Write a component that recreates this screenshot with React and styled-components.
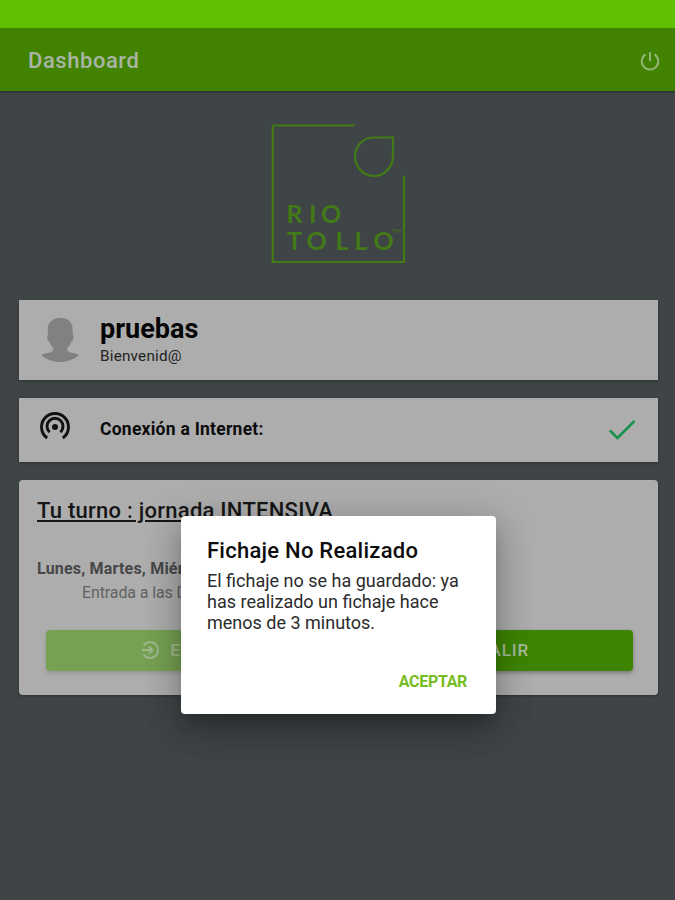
import React from "react";
import styled, { createGlobalStyle } from "styled-components";

const GlobalStyle = createGlobalStyle`
  *, *::before, *::after { box-sizing: border-box; }
  body { margin: 0; background: #3f4446; font-family: Roboto, "Liberation Sans", sans-serif; }
  h1, h2, h3, p { margin: 0; font-weight: 400; }
  button { border: 0; padding: 0; background: none; font-family: inherit; }
  svg { display: block; flex: none; }
`;

const Screen = styled.div`
  position: relative;
  width: 675px;
  height: 900px;
  overflow: hidden;
  background: #3f4446;
`;

const StatusBar = styled.div`
  height: 28px;
  background: #62c002;
`;

const Toolbar = styled.header`
  display: flex;
  align-items: center;
  justify-content: space-between;
  height: 63px;
  padding: 2px 13px 0 28px;
  background: #418200;
  box-shadow: 0 1px 2px rgba(0, 0, 0, 0.35);
`;

const ToolbarTitle = styled.h1`
  font-size: 22px;
  line-height: 28px;
  font-weight: 500;
  letter-spacing: 0.55px;
  color: #a9b5a5;
`;

const IconButton = styled.button`
  display: flex;
  color: #91b474;
`;

const Content = styled.main`
  display: flex;
  flex-direction: column;
  padding: 31px 17px 0 19px;
`;

const LogoRow = styled.div`
  display: flex;
  justify-content: center;
  height: 178px;
  padding-right: 1px;
`;

const Card = styled.section`
  display: flex;
  align-items: center;
  height: ${(p) => p.$height}px;
  margin-bottom: 18px;
  padding: 0 22px 0 20px;
  background: #adadad;
  box-shadow: 0 1px 3px rgba(0, 0, 0, 0.3);
`;

const IconSlot = styled.div`
  width: 61px;
  padding-bottom: ${(p) => p.$lift || 0}px;
`;

const UserName = styled.h2`
  font-size: 27px;
  line-height: 30px;
  font-weight: 700;
  color: #050505;
`;

const Welcome = styled.p`
  margin-top: 2px;
  font-size: 15.3px;
  line-height: 20px;
  letter-spacing: 0.2px;
  color: #222;
`;

const ConnectionLabel = styled.p`
  flex: 1;
  padding-bottom: 2px;
  font-size: 17.500px;
  line-height: 22px;
  font-weight: 700;
  letter-spacing: 0.25px;
  color: #0b0b0b;
`;

const ShiftCard = styled.section`
  display: flex;
  flex-direction: column;
  height: 215px;
  padding: 17px 25px 0 18px;
  border-radius: 4px;
  background: #adadad;
  box-shadow: 0 1px 3px rgba(0, 0, 0, 0.3);
`;

const ShiftTitle = styled.h2`
  font-size: 22px;
  line-height: 28px;
  font-weight: 500;
  letter-spacing: 0.25px;
  text-decoration: underline;
  text-decoration-thickness: 2px;
  text-underline-offset: 2px;
  color: #161616;
`;

const ShiftDays = styled.p`
  margin-top: 34px;
  font-size: 16px;
  line-height: 20px;
  font-weight: 700;
  letter-spacing: 0.2px;
  color: #474747;
`;

const ShiftTime = styled.p`
  margin: 4px 0 0 45px;
  font-size: 16px;
  line-height: 20px;
  letter-spacing: -0.12px;
  color: #626262;
`;

const ButtonRow = styled.div`
  display: grid;
  grid-template-columns: 1fr 1fr;
  gap: 10px;
  margin: 27px 0 0 9px;
`;

const ActionButton = styled.button`
  display: flex;
  align-items: center;
  justify-content: center;
  gap: 10px;
  height: 41px;
  padding-bottom: 1px;
  border-radius: 4px;
  font-size: 17px;
  font-weight: 500;
  letter-spacing: 0.9px;
  background: ${(p) => (p.$muted ? "#76a052" : "#3d8500")};
  color: ${(p) => (p.$muted ? "#a3ba91" : "#a8bb9b")};
  box-shadow: 0 2px 4px rgba(0, 0, 0, ${(p) => (p.$muted ? 0.15 : 0.3)});
`;

const Dialog = styled.div`
  position: absolute;
  left: 181px;
  top: 516px;
  display: flex;
  flex-direction: column;
  width: 315px;
  height: 198px;
  padding: 21px 26px 0;
  border-radius: 4px;
  background: #fff;
  box-shadow: 0 11px 15px -7px rgba(0, 0, 0, 0.25), 0 20px 36px 3px rgba(0, 0, 0, 0.14),
    0 6px 34px 6px rgba(0, 0, 0, 0.14);
`;

const DialogTitle = styled.h3`
  font-size: 22px;
  line-height: 28px;
  font-weight: 500;
  letter-spacing: 0.25px;
  color: #0d0d0d;
`;

const DialogText = styled.p`
  margin-top: 5px;
  font-size: 18px;
  line-height: 21px;
  white-space: nowrap;
  color: #2b2b2b;
`;

const DialogAction = styled.button`
  align-self: flex-end;
  margin: 39px 3px 0 0;
  font-size: 16px;
  line-height: 20px;
  font-weight: 700;
  letter-spacing: -0.32px;
  color: #76bd22;
`;

const LogoText = styled.text`
  font-family: Lato, sans-serif;
  font-size: 25px;
  font-weight: 700;
  fill: #427a17;
`;

const TrademarkText = styled.text`
  font-family: Lato, sans-serif;
  font-size: 6px;
  fill: #427a17;
`;

function Logo() {
  return (
    <svg width="136" height="142" viewBox="0 0 136 142" fill="none" stroke="#427a17" strokeWidth="2.2">
      <path d="M84.500 3.500H2.800V140H134V53.500" />
      <path d="M123 15.500H104C93 15.500 85 24 85 34.500S93.500 54 104 54S123 45 123 34Z" />
      <g stroke="none">
        <LogoText x="16.500 39 51" y="101">RIO</LogoText>
        <LogoText x="17 36.500 65.500 84.500 103.500" y="128">TOLLO</LogoText>
        <TrademarkText x="122" y="111">TM</TrademarkText>
      </g>
    </svg>
  );
}

function PowerIcon() {
  return (
    <svg width="24" height="24" viewBox="0 0 24 24" fill="none" stroke="currentColor" strokeWidth="2">
      <path d="M12 3v9M7.500 5.300A8.300 8.300 0 1 0 16.500 5.300" />
    </svg>
  );
}

function Avatar() {
  return (
    <svg width="43" height="46" viewBox="1 0 39 46" preserveAspectRatio="none" fill="#818181">
      <path d="M20.500 1C13 1 9 5.500 9 12.500C9 14.500 9 16 9.300 17.500C7.700 18 8.300 23.500 10.600 25C11.300 27.500 12.500 29.500 14 31C14.500 35 11.500 35.500 7.500 36.200C4.500 36.800 3.400 37.500 3.500 38.500C8 42.500 13.500 45 20 45C26.500 45 32.500 42.500 37 38.500C37 37.500 35.500 36.800 33 36.200C29 35.500 26 35 26.500 31C28 29.500 29.500 27.500 30.200 25C32.500 23.500 33 18 31.500 17.500C31.800 16 31.800 14.500 31.500 12.500C31.500 5.500 28 1 20.500 1Z" />
    </svg>
  );
}

function SignalIcon() {
  return (
    <svg width="32" height="30" viewBox="0 0 32 30" fill="none" stroke="#111" strokeWidth="2.900">
      <path d="M8.200 27A13.500 13.500 0 1 1 23.800 27M10.600 21.200A8 8 0 1 1 21.400 21.200" />
      <circle cx="16" cy="16" r="3" fill="#111" stroke="none" />
    </svg>
  );
}

function CheckIcon() {
  return (
    <svg width="28" height="22" viewBox="0 0 28 22" fill="none" stroke="#17924c" strokeWidth="2.600">
      <path d="M1.800 11.500L9.500 19L26.500 2" />
    </svg>
  );
}

function EnterIcon() {
  return (
    <svg width="20" height="20" viewBox="0 0 20 20" fill="none" stroke="currentColor" strokeWidth="1.800">
      <path d="M3.500 5.500A8 8 0 1 1 3.500 14.500M2 10H12.500M9 6.500L12.500 10L9 13.500" />
    </svg>
  );
}

function ExitIcon() {
  return (
    <svg width="20" height="20" viewBox="0 0 20 20" fill="none" stroke="currentColor" strokeWidth="1.800">
      <path d="M13 4A7.500 7.500 0 1 0 13 16M7 10H19M15.500 6.500L19 10L15.500 13.500" />
    </svg>
  );
}

export default function App() {
  return (
    <>
      <GlobalStyle />
      <Screen>
        <StatusBar />
        <Toolbar>
          <ToolbarTitle>Dashboard</ToolbarTitle>
          <IconButton aria-label="Salir">
            <PowerIcon />
          </IconButton>
        </Toolbar>
        <Content>
          <LogoRow>
            <Logo />
          </LogoRow>
          <Card $height={80}>
            <IconSlot>
              <Avatar />
            </IconSlot>
            <div>
              <UserName>pruebas</UserName>
              <Welcome>Bienvenid@</Welcome>
            </div>
          </Card>
          <Card $height={64}>
            <IconSlot $lift={9}>
              <SignalIcon />
            </IconSlot>
            <ConnectionLabel>Conexión a Internet:</ConnectionLabel>
            <CheckIcon />
          </Card>
          <ShiftCard>
            <ShiftTitle>Tu turno : jornada INTENSIVA</ShiftTitle>
            <ShiftDays>Lunes, Martes, Miércoles</ShiftDays>
            <ShiftTime>Entrada a las D</ShiftTime>
            <ButtonRow>
              <ActionButton $muted>
                <EnterIcon />
                ENTRAR
              </ActionButton>
              <ActionButton>
                <ExitIcon />
                SALIR
              </ActionButton>
            </ButtonRow>
          </ShiftCard>
        </Content>
        <Dialog role="alertdialog">
          <DialogTitle>Fichaje No Realizado</DialogTitle>
          <DialogText>
            El fichaje no se ha guardado: ya
            <br />
            has realizado un fichaje hace
            <br />
            menos de 3 minutos.
          </DialogText>
          <DialogAction>ACEPTAR</DialogAction>
        </Dialog>
      </Screen>
    </>
  );
}
